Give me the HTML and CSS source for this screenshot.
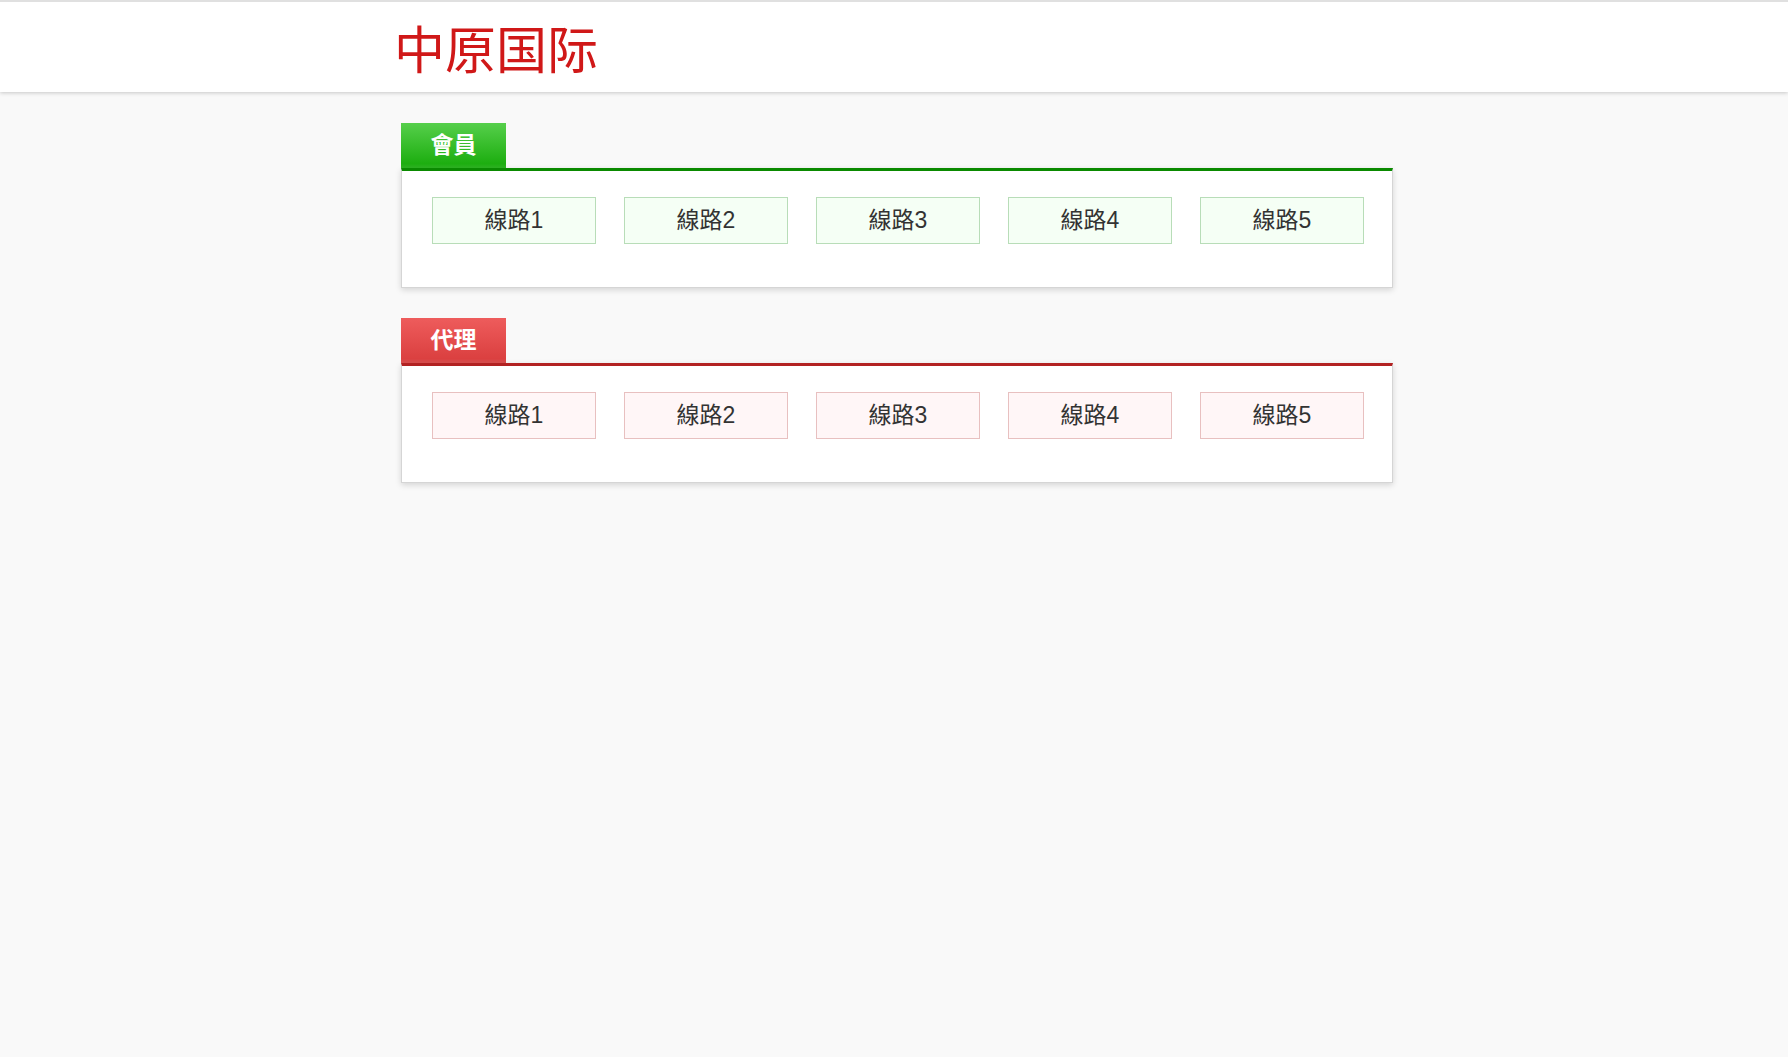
FILE: index.html
```html
<!DOCTYPE html>
<html lang="zh-TW">
<head>
<meta charset="utf-8">
<title>中原国际</title>
<link rel="stylesheet" href="styles.css">
</head>
<body>
	<div id="header">
		<div class="wrap">
			<h1 class="logo" lang="zh-CN">中原国际</h1>
		</div>
	</div>
	<div id="main" class="wrap">
		<!-- 會員 -->
		<div class="section member">
			<h2 class="tab">會員</h2>
			<div class="lines">
				<a href="#">線路1</a>
				<a href="#">線路2</a>
				<a href="#">線路3</a>
				<a href="#">線路4</a>
				<a href="#">線路5</a>
			</div>
		</div>
		<!-- 代理 -->
		<div class="section agent">
			<h2 class="tab">代理</h2>
			<div class="lines">
				<a href="#">線路1</a>
				<a href="#">線路2</a>
				<a href="#">線路3</a>
				<a href="#">線路4</a>
				<a href="#">線路5</a>
			</div>
		</div>
	</div>
</body>
</html>
```

FILE: styles.css
```css
* {
    margin: 0;
    padding: 0;
    box-sizing: border-box;
}

body {
    background-color: #F9F9F9;
    color: #333;
    font-family: "Liberation Sans", "Noto Sans CJK TC", sans-serif;
    font-size: 23px;
}

.wrap {
    max-width: 1000px;
    margin: 0 auto;
}

#header {
    background-color: #FFF;
    border-top: 2px solid #E0E0E0;
    box-shadow: 0 1px 4px rgba(0, 0, 0, 0.2);
}

.logo {
    color: #D01818;
    font-family: "Noto Sans CJK SC", sans-serif;
    font-size: 51px;
    font-weight: normal;
    line-height: 90px;
}

#main {
    padding: 31px 1px 0 7px;
}

.section {
    margin-bottom: 30px;
}

.tab {
    width: 105px;
    height: 45px;
    line-height: 45px;
    text-align: center;
    font-size: 23px;
    color: #FFF;
}

.lines {
    display: grid;
    grid-template-columns: repeat(auto-fit, minmax(160px, 1fr));
    gap: 28px;
    padding: 26px 28px 43px 30px;
    background-color: #FFF;
    border: 1px solid #D5D5D5;
    border-top-width: 3px;
    box-shadow: 0 2px 6px rgba(0, 0, 0, 0.15);
}

.lines a {
    height: 47px;
    line-height: 45px;
    text-align: center;
    text-decoration: none;
    color: #333;
    border: 1px solid;
}

.member .tab {
    background: linear-gradient(#56CF4B, #1DAE10 90%, #2FB524);
}

.member .lines {
    border-top-color: #0A8A00;
}

.member .lines a {
    background-color: #F5FFF5;
    border-color: #B8DDB8;
}

.member .lines a:hover {
    background-color: #E3F8E3;
}

.agent .tab {
    background: linear-gradient(#EE5C5C, #DB4040 90%, #DB5252);
}

.agent .lines {
    border-top-color: #B22222;
}

.agent .lines a {
    background-color: #FFF6F7;
    border-color: #E8C0C0;
}

.agent .lines a:hover {
    background-color: #FCE6E6;
}
```
